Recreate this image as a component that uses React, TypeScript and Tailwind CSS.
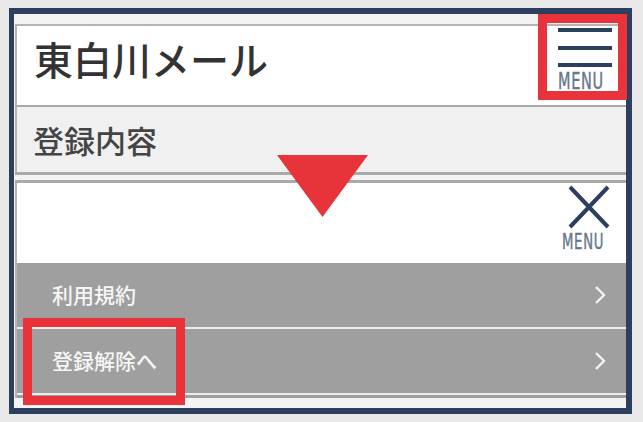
const jp = "font-['Noto_Sans_CJK_JP','Noto_Sans',sans-serif]";
const cond = "font-['DejaVu_Sans_Condensed','Liberation_Sans_Narrow','DejaVu_Sans',sans-serif]";

function MenuLabel({ className = "" }: { className?: string }) {
  return (
    <span
      className={`${cond} block origin-left scale-x-[0.7] leading-none tracking-[1px] text-[#66778a] [-webkit-text-stroke:0.4px_#66778a] ${className}`}
    >
      MENU
    </span>
  );
}

function Chevron() {
  return (
    <svg width="12" height="20" viewBox="0 0 12 20" className="shrink-0">
      <path d="M2 2 L10 10 L2 18" fill="none" stroke="#f4f4f4" strokeWidth="2.4" />
    </svg>
  );
}

export default function App() {
  const items = ["利用規約", "登録解除へ"];

  return (
    <div className="relative h-[422px] w-[643px] overflow-hidden bg-[#e9e9e9] pl-[9px] pt-[8px]">
      <div className="h-[406px] w-[623px] border-[6px] border-l-[5px] border-[#2c3f5f] bg-[#f3f3f3] pl-px pt-[10px]">
        {/* header */}
        <div className="flex h-[81px] items-start justify-between border-l-2 border-t-2 border-[#b4b4b4] bg-white pr-[14px]">
          <h1 className={`${jp} pl-[17px] pt-[13px] text-[39px] font-medium leading-none text-[#333]`}>
            東白川メール
          </h1>
          <div className="flex w-[54px] flex-col pt-[2px]">
            <span className="h-[4px] w-full bg-[#2c3f5f]" />
            <span className="mt-[14px] h-[4px] w-full bg-[#2c3f5f]" />
            <span className="mt-[13px] h-[4px] w-full bg-[#2c3f5f]" />
            <MenuLabel className="mt-[3px] text-[23px]" />
          </div>
        </div>
        <div className="h-[2px] bg-[#a9a9a9]" />

        {/* page title */}
        <div className="flex h-[65px] items-center border-l-2 border-[#b4b4b4] bg-[#f0f0f0] pl-[16px]">
          <h2 className={`${jp} text-[31px] font-medium leading-none text-[#444]`}>登録内容</h2>
        </div>
        <div className="h-[3px] bg-[#a9a9a9]" />
        <div className="h-[5px] bg-[#f3f3f3]" />
        <div className="h-[3px] bg-[#a9a9a9]" />

        {/* opened menu */}
        <div className="flex h-[80px] justify-end border-l-2 border-[#b4b4b4] bg-white pr-[15px]">
          <div className="flex w-[44px] flex-col items-start pt-[2px]">
            <svg width="44" height="44" viewBox="0 0 44 44">
              <path d="M3 2 L41 42 M41 2 L3 42" stroke="#2c3f5f" strokeWidth="4" />
            </svg>
            <MenuLabel className="ml-[-5px] mt-[3px] text-[21px]" />
          </div>
        </div>
        <div className="h-[135px] border-l-2 border-[#b4b4b4] bg-[#9f9f9f]">
          {items.map((label) => (
            <div key={label}>
              <div className="flex h-[64px] items-center justify-between pl-[35px] pr-[20px]">
                <span className={`${jp} text-[21px] font-medium text-[#f6f6f6]`}>{label}</span>
                <Chevron />
              </div>
              <div className="h-[2px] bg-[#ececec]" />
            </div>
          ))}
        </div>
      </div>

      {/* annotations */}
      <div className="absolute left-[538px] top-[14px] h-[86px] w-[89px] border-[9px] border-[#e8333a]" />
      <div className="absolute left-[23px] top-[318px] h-[87px] w-[162px] border-[9px] border-[#e8333a]" />
      <svg className="absolute left-[277px] top-[155px]" width="91" height="62" viewBox="0 0 91 62">
        <path d="M0 0 H91 L45.5 62 Z" fill="#e8333a" />
      </svg>
    </div>
  );
}
